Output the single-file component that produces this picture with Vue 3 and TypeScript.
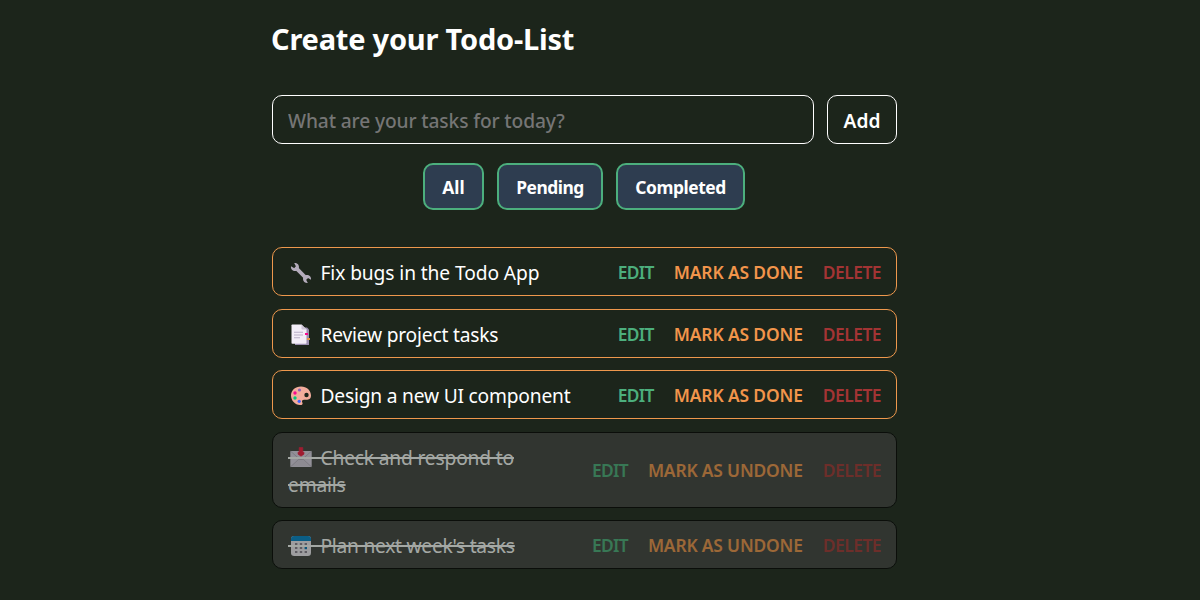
<script setup lang="ts">
import { ref, computed } from 'vue'

type Icon = 'wrench' | 'pages' | 'palette' | 'mail' | 'calendar'
type Filter = 'All' | 'Pending' | 'Completed'
interface Task {
  id: number
  icon: Icon
  text: string
  done: boolean
}

const filters: Filter[] = ['All', 'Pending', 'Completed']
const filter = ref<Filter>('All')
const draft = ref('')
const tasks = ref<Task[]>([
  { id: 1, icon: 'wrench', text: 'Fix bugs in the Todo App', done: false },
  { id: 2, icon: 'pages', text: 'Review project tasks', done: false },
  { id: 3, icon: 'palette', text: 'Design a new UI component', done: false },
  { id: 4, icon: 'mail', text: 'Check and respond to emails', done: true },
  { id: 5, icon: 'calendar', text: "Plan next week's tasks", done: true },
])

const visible = computed(() =>
  tasks.value.filter((t) => filter.value === 'All' || t.done === (filter.value === 'Completed')),
)

function add() {
  const text = draft.value.trim()
  if (!text) return
  tasks.value.push({ id: Date.now(), icon: 'pages', text, done: false })
  draft.value = ''
}
function edit(task: Task) {
  draft.value = task.text
  remove(task)
}
function remove(task: Task) {
  tasks.value = tasks.value.filter((t) => t.id !== task.id)
}
</script>

<template>
  <main class="page">
    <div class="column">
      <h1 class="title">Create your Todo-List</h1>
      <form class="entry" @submit.prevent="add">
        <input v-model="draft" class="field" placeholder="What are your tasks for today?" />
        <button class="add" type="submit">Add</button>
      </form>
      <div class="filters">
        <button v-for="f in filters" :key="f" class="filter" :class="f.toLowerCase()" @click="filter = f">{{ f }}</button>
      </div>
      <ul class="list">
        <li v-for="t in visible" :key="t.id" class="task" :class="[t.icon + '-task', { done: t.done }]">
          <p class="label"><span class="icon-slot"><svg class="icon" viewBox="0 0 22 22">
            <g v-if="t.icon === 'wrench'">
              <path d="M5.2 5.2 17 17" stroke="#b4acbc" stroke-width="3.8" />
              <path d="M1 4.2 4.4 6.2 6 4.5 4.2 1.1C7.4.6 9.7 3.2 8.8 6.4L6.5 8.8C3.3 9.6.5 7.4 1 4.2Z" fill="#b4acbc" />
              <path d="M21 17.8 17.6 15.8 16 17.5l1.8 3.4c-3.2.5-5.5-2.1-4.6-5.3l2.3-2.4c3.2-.8 6 1.4 5.5 4.6Z" fill="#b4acbc" />
            </g>
            <g v-else-if="t.icon === 'pages'">
              <path d="M5 3.5h12l2 2V21H5Z" fill="#9b8fb0" />
              <path d="M1.5 1.3q0-.8.8-.8h9.2l5 5V19q0 .8-.8.8H2.3q-.8 0-.8-.8Z" fill="#f3eef8" />
              <path d="M11.5.5v4.2q0 .8.8.8h4.2Z" fill="#cdc4d6" />
              <path d="M4 8.2h9M4 11h9M4 13.8h6" stroke="#b9aec6" stroke-width="1.1" />
              <rect x="15" y="9" width="3" height="2" fill="#f70a8d" />
              <rect x="17" y="14" width="3" height="2" fill="#e19747" />
            </g>
            <g v-else-if="t.icon === 'palette'">
              <path d="M11 1.4C5.2 1.4 1 5.2 1 10.6 1 15.6 5 20 10 20c2.6 0 3.1-1.2 2.3-2.6-.8-1.5 0-2.7 1.8-2.7h3.2c2.6 0 3.7-1.6 3.7-4.1C21 5.2 16.7 1.4 11 1.4Z" fill="#f3ad9c" />
              <circle cx="16.5" cy="10" r="2.2" fill="#1c251b" />
              <circle cx="9.5" cy="5" r="1.6" fill="#8c63b8" />
              <circle cx="5" cy="8" r="1.7" fill="#f70a8d" />
              <circle cx="5" cy="13" r="1.7" fill="#00c878" />
              <circle cx="9.2" cy="16.3" r="1.6" fill="#3f5fff" />
            </g>
            <g v-else-if="t.icon === 'mail'">
              <rect x=".3" y="4" width="21.4" height="16" rx=".7" fill="#e1d8ec" />
              <path d="m.8 19.6 8-7.4h4.4l8 7.4" fill="#d8cfe2" stroke="#b4acbc" stroke-width=".8" />
              <path d="m.8 4.4 8.7 7.7q1.5 1.2 3 0l8.7-7.7" fill="#e1d8ec" stroke="#b4acbc" stroke-width=".8" />
              <path d="M9.2.5h3.6v4.7h1.2v2L11 9.2 8 7.2v-2h1.2Z" fill="#f8173f" stroke="#f8173f" stroke-width=".6" />
            </g>
            <g v-else>
              <rect x="1" y="1" width="20" height="20" rx="3.2" fill="#f3eef8" />
              <path d="M1 6V4q0-3 3-3h14q3 0 3 3v2Z" fill="#0084ce" />
              <path d="M5 9h2.4M9.8 9h2.4M14.6 9H17M5 13h2.4M9.8 13h2.4M5 17h2.4M9.8 17h2.4M14.6 17H17" stroke="#8a8292" stroke-width="2.2" />
              <path d="M14.6 13H17" stroke="#0074ba" stroke-width="2.4" />
            </g>
          </svg></span>{{ t.text }}</p>
          <div class="actions">
            <button class="act edit" @click="edit(t)">EDIT</button>
            <button class="act mark" @click="t.done = !t.done">{{ t.done ? 'MARK AS UNDONE' : 'MARK AS DONE' }}</button>
            <button class="act delete" @click="remove(t)">DELETE</button>
          </div>
        </li>
      </ul>
    </div>
  </main>
</template>

<style>
body {
  background: #1c251b;
}
</style>

<style scoped>
.page {
  box-sizing: border-box;
  height: 600px;
  overflow: hidden;
  padding: 19px 0 0 272px;
  background: #1c251b;
  color: #fff;
  font-family: 'Segoe UI', 'Noto Sans', 'Open Sans', sans-serif;
  font-size: 19.2px;
}
.column {
  width: 625px;
}
.title {
  margin: 0 0 0 -1px;
  height: 40px;
  font-size: 29px;
  line-height: 40px;
  font-weight: 700;
  letter-spacing: -0.22px;
  white-space: nowrap;
}
button,
input {
  box-sizing: border-box;
  margin: 0;
  font-family: inherit;
  color: inherit;
  background: none;
}
button {
  cursor: pointer;
  white-space: nowrap;
}
.entry {
  display: flex;
  gap: 13px;
  margin-top: 36px;
  height: 49px;
}
.field {
  flex: 1;
  min-width: 0;
  padding: 1px 15px 0;
  border: 1px solid #fff;
  border-radius: 10px;
  font-size: 19.2px;
  font-weight: 500;
  letter-spacing: -0.13px;
  outline: none;
}
.field::placeholder {
  color: #757575;
  opacity: 1;
}
.add {
  width: 70px;
  padding: 2px 0 0;
  border: 1px solid #fff;
  border-radius: 10px;
  font-size: 19.2px;
  font-weight: 600;
}
.filters {
  display: flex;
  justify-content: center;
  gap: 13px;
  margin: 19px 1px 0 0;
}
.filter {
  height: 47px;
  padding: 1px 0 0;
  border: 2px solid #4caf7d;
  border-radius: 10px;
  background: #2e3d50;
  font-size: 17.4px;
  font-weight: 700;
}
.all {
  width: 61px;
}
.pending {
  width: 106px;
  letter-spacing: -0.5px;
}
.completed {
  width: 129px;
  letter-spacing: -0.45px;
}
.list {
  display: flex;
  flex-direction: column;
  gap: 12.6px;
  margin: 37px 0 0;
  padding: 0;
  list-style: none;
}
.task {
  display: flex;
  align-items: center;
  justify-content: space-between;
  padding: 10px 15px;
  border: 1px solid #ee984d;
  border-radius: 10px;
}
.label {
  margin: 0 0 -1px;
  padding-top: 1px;
  max-width: 290px;
  line-height: 27px;
  letter-spacing: -0.1px;
}
.pages-task .label {
  letter-spacing: -0.2px;
}
.palette-task .label {
  letter-spacing: -0.2px;
}
.mail-task .label {
  letter-spacing: -0.17px;
}
.calendar-task .label {
  letter-spacing: -0.25px;
}
.done {
  background: #3f413f;
  border-color: #000;
  opacity: 0.6;
}
.done .label {
  max-width: 260px;
  text-decoration: line-through;
  text-decoration-thickness: 2px;
}
.icon-slot {
  position: relative;
  padding-left: 32.5px;
}
.done .icon-slot::after {
  content: '';
  position: absolute;
  left: 0;
  top: 13px;
  width: 32.5px;
  height: 2px;
  background: #fff;
}
.icon {
  position: absolute;
  left: 2px;
  top: 3px;
  width: 22px;
  height: 22px;
  fill: none;
}
.actions {
  display: flex;
  gap: 20px;
}
.act {
  padding: 1px 0 0;
  border: 0;
  font-size: 17.4px;
  line-height: 26px;
  font-weight: 600;
}
.edit {
  color: #4caf7d;
  letter-spacing: -0.7px;
}
.mark {
  color: #f2954b;
  letter-spacing: -0.12px;
}
.done .mark {
  letter-spacing: -0.17px;
}
.delete {
  color: #a33434;
  letter-spacing: -0.5px;
}
</style>
